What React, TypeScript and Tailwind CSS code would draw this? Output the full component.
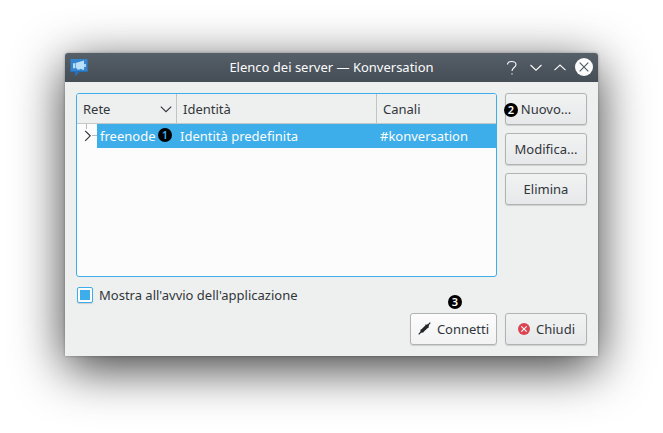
import type { ReactNode } from "react";

function Chevron({ d, color, className = "" }: { d: string; color: string; className?: string }) {
  return (
    <svg width="12" height="12" viewBox="0 0 12 12" fill="none" stroke={color} strokeWidth="1.1" className={`shrink-0 ${className}`}>
      <path d={d} />
    </svg>
  );
}

function Step({ n, className }: { n: number; className: string }) {
  return (
    <span className={`absolute flex size-[14px] items-center justify-center rounded-full bg-black pb-px text-[11px] leading-none font-semibold ${className}`}>
      {n}
    </span>
  );
}

function Button({ children, className = "" }: { children: ReactNode; className?: string }) {
  return (
    <button
      className={`relative flex h-8 shrink-0 items-center justify-center rounded-[3px] border border-[#b0b3b2] bg-linear-to-b from-[#f1f2f2] to-[#e7e8e9] pb-px shadow-[0_1px_1px_rgba(0,0,0,0.14)] ${className}`}
    >
      {children}
    </button>
  );
}

function TitleBar() {
  return (
    <header className="flex h-[29px] items-center rounded-t-[3px] bg-linear-to-b from-[#566069] to-[#454d55] pr-[5px] pl-[5px] text-[#fcfcfc]">
      <svg width="19" height="19" viewBox="0 0 19 19" className="-mt-px shrink-0">
        <path d="M.5 1h17v13H9l-3.5 4v-4h-5z" fill="#3484cf" />
        <path d="M.5 13h17v1H9l-3.5 4v-4h-5z" fill="#2670b8" />
        <path d="M3 5.2h2v5H3zM5.6 5 14 2.6v9.4l-4-1.2v.8H7v-1.2l-1.4-.4z" fill="#b9e0fb" />
        <path d="M14 6h2v3h-2z" fill="#9fd2f8" />
      </svg>
      <h1 className="flex-1 pb-[2px] pl-[68px] text-center">Elenco dei server — Konversation</h1>
      <div className="flex items-center">
        <svg width="12" height="16" viewBox="0 0 12 16" fill="none" stroke="#fcfcfc" strokeWidth="1.1" className="mr-[12px]">
          <path d="M1.5 4.5C1.5 2.2 3.2 1.5 5.6 1.5S10 2.5 10 4.5C10 7.5 6 7.5 6 11M6 13.2v1.4" />
        </svg>
        <Chevron d="M.5 3 6 8.2l5.5-5.2" color="#fcfcfc" className="mr-[12px]" />
        <Chevron d="M.5 8.2 6 3l5.5 5.2" color="#fcfcfc" className="mr-[9px]" />
        <svg width="18" height="18" viewBox="0 0 18 18" className="-mt-px">
          <circle cx="9" cy="9" r="9" fill="#fcfcfc" />
          <path d="m4.7 4.7 8.6 8.6m0-8.6-8.6 8.6" stroke="#4d565e" strokeWidth="1.1" />
        </svg>
      </div>
    </header>
  );
}

function ServerTable() {
  return (
    <div className="h-[184px] w-[421px] shrink-0 overflow-hidden rounded-[3px] border border-[#3daee9] bg-[#fcfcfc]">
      <div className="flex h-[30px] border-b border-[#c4c7c6] bg-[#eef0ef]">
        <div className="flex w-[100px] items-center justify-between border-r border-[#c1c4c3] pr-[4px] pl-[6px]">
          Rete
          <Chevron d="M.8 3.7 6 8.7l5.2-5" color="#31363b" />
        </div>
        <div className="flex w-[200px] items-center border-r border-[#c1c4c3] pl-[6px]">Identità</div>
        <div className="flex flex-1 items-center pl-[6px]">Canali</div>
      </div>
      <div className="flex h-6 items-center text-[#fcfcfc]">
        <svg width="20" height="24" viewBox="0 0 20 24" fill="none" className="shrink-0">
          <path d="M9.5 0v5M15 11.5h5" stroke="#b8bbbd" />
          <path d="m8.2 6.8 5 5-5 5" stroke="#31363b" strokeWidth="1.2" />
        </svg>
        <div className="flex h-6 flex-1 items-center bg-[#3daee9]">
          <div className="relative w-[80px] pl-[3px]">
            freenode
            <Step n={1} className="top-[1px] left-[61px] text-[#3daee9]" />
          </div>
          <div className="w-[200px] pl-[3px]">Identità predefinita</div>
          <div className="pl-[3px]">#konversation</div>
        </div>
      </div>
    </div>
  );
}

export default function App() {
  return (
    <div className="h-[433px] w-[663px] overflow-hidden bg-white pt-[53px] pl-[65px] font-['Noto_Sans',sans-serif] text-[13px] leading-[18px] whitespace-nowrap text-[#31363b]">
      <main className="h-[303px] w-[533px] rounded-t-[3px] bg-[#eef0ef] shadow-[0_12px_50px_rgba(0,0,0,0.78),0_0_3px_rgba(0,0,0,0.3)]">
        <TitleBar />
        <div className="px-[11px] pt-[11px]">
          <div className="flex gap-2">
            <ServerTable />
            <div className="flex w-[82px] flex-col gap-2">
              <Button>
                <Step n={2} className="top-[9px] left-[-2px] text-white" />
                Nuovo...
              </Button>
              <Button>Modifica...</Button>
              <Button>Elimina</Button>
            </div>
          </div>
          <label className="mt-[9px] flex h-[18px] items-center gap-[6px] pl-px">
            <span className="flex size-4 items-center justify-center rounded-[2px] border border-[#3daee9] bg-[#fcfcfc] shadow-[0_1px_1px_rgba(0,0,0,0.15)]">
              <span className="size-[10px] bg-[#3daee9]" />
            </span>
            Mostra all'avvio dell'applicazione
          </label>
          <div className="mt-[9px] flex justify-end gap-2">
            <Button className="w-[87px] gap-[6px] from-[#fcfcfc] to-[#f3f3f4]">
              <Step n={3} className="top-[-19px] left-[37px] text-white" />
              <svg width="13" height="13" viewBox="0 0 13 13" className="shrink-0">
                <path d="M.7 12.3 3 10M10 3l2.3-2.3" stroke="#232629" strokeWidth="1.2" />
                <path d="M2.2 10.8 2.6 7.6l.9-.3L7.5 3.2l-.2-.9 1 .4 2-.6.8.8-.6 2 .4 1-.9-.2-4.3 4-.3.9z" fill="#232629" />
              </svg>
              Connetti
            </Button>
            <Button className="w-[82px] gap-[6px] pl-px">
              <svg width="12" height="12" viewBox="0 0 12 12" className="shrink-0">
                <circle cx="6" cy="6" r="6" fill="#da4453" />
                <path d="m3.3 3.3 5.4 5.4m0-5.4L3.3 8.7" stroke="#fcfcfc" strokeWidth="1.1" />
              </svg>
              Chiudi
            </Button>
          </div>
        </div>
      </main>
    </div>
  );
}
